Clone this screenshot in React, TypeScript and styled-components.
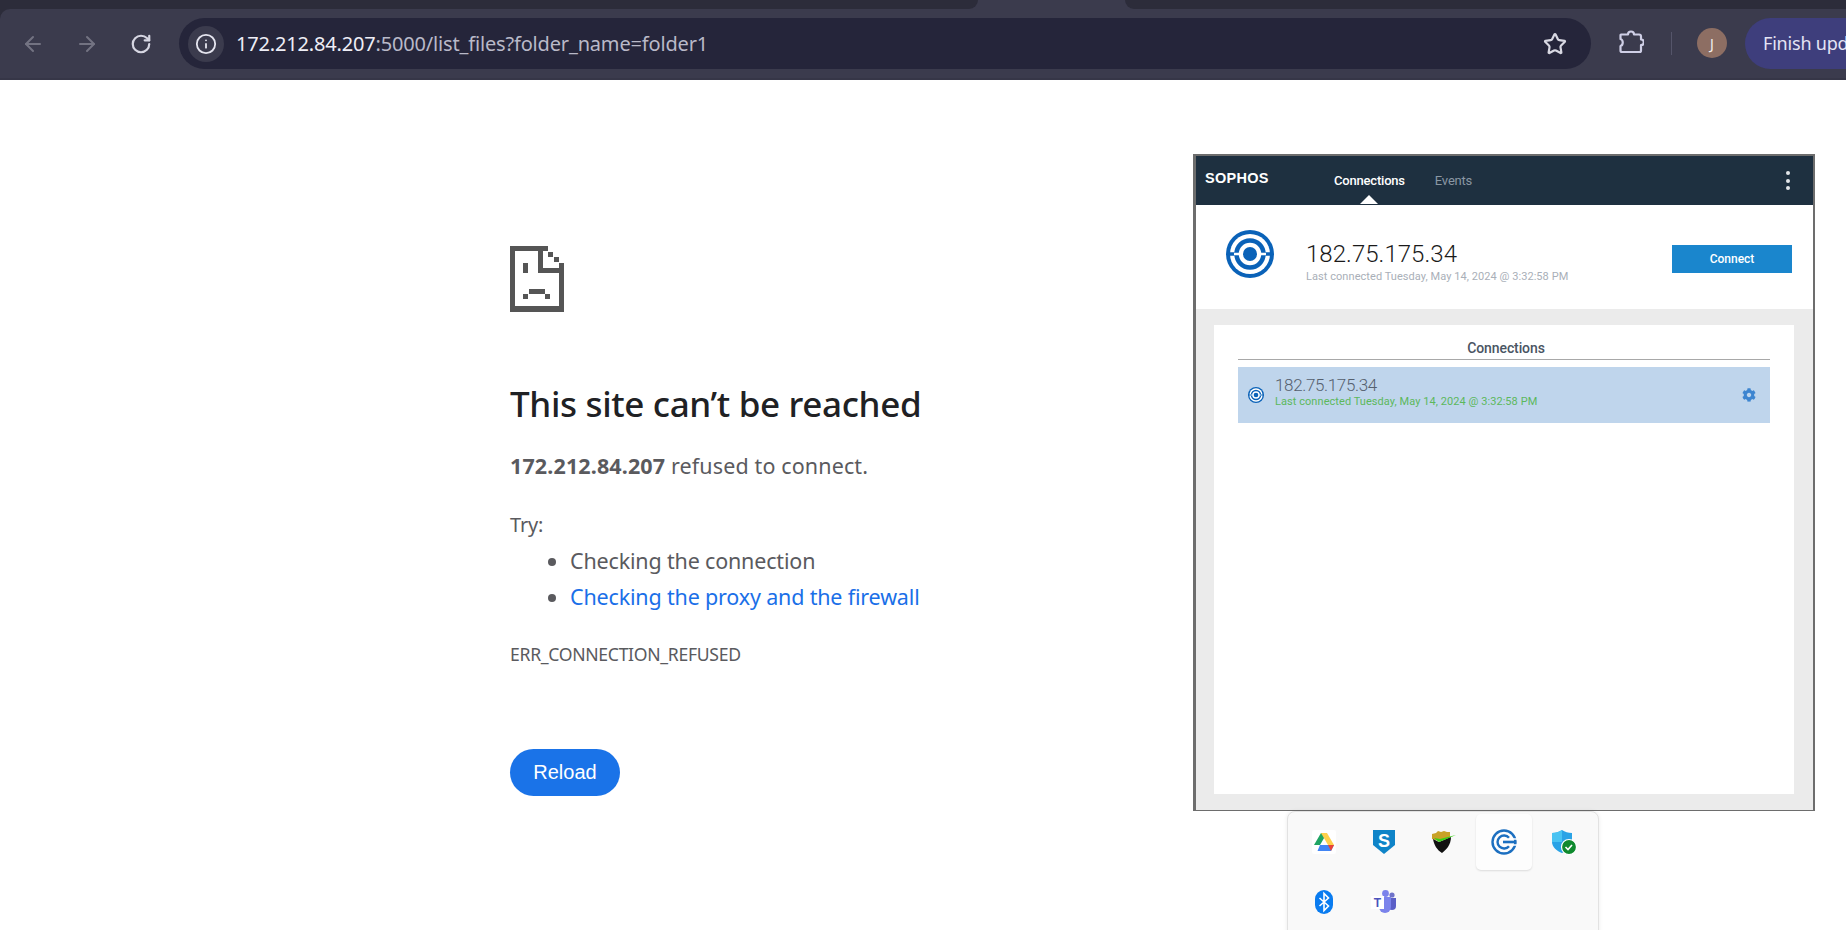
import React from "react";
import styled, { createGlobalStyle } from "styled-components";
import { ArrowLeft, ArrowRight, RotateCw, Info, Star } from "lucide-react";
import { FaCog } from "react-icons/fa";

const GlobalStyle = createGlobalStyle`
  html, body {
    margin: 0;
    padding: 0;
    background: #fff;
    overflow: hidden;
  }
`;

const Screen = styled.div`
  width: 1846px;
  height: 930px;
  overflow: hidden;
  display: flex;
  flex-direction: column;
  font-family: "Noto Sans", "Open Sans", sans-serif;
`;

// Browser chrome
const Header = styled.header`
  background: #2c2c3a;
  flex-shrink: 0;
`;

const TabStrip = styled.div`
  height: 9px;
  display: flex;
  background: #3b3b4d;
`;

const DarkTab = styled.div<{ $side: "left" | "right" }>`
  background: #2c2c3a;
  height: 9px;
  width: ${(p) => (p.$side === "left" ? "978px" : "721px")};
  margin-left: ${(p) => (p.$side === "left" ? "0" : "147px")};
  border-bottom-right-radius: ${(p) => (p.$side === "left" ? "12px" : "0")};
  border-bottom-left-radius: ${(p) => (p.$side === "right" ? "12px" : "0")};
`;

const Toolbar = styled.div`
  height: 60px;
  padding-top: 9px;
  display: flex;
  align-items: flex-start;
  background: #3b3b4d;
  border-top-left-radius: 10px;
  border-bottom: 2px solid #363647;
  overflow: hidden;
`;

const NavGroup = styled.div`
  display: flex;
  padding-left: 6px;
  margin-right: 11px;
`;

const NavButton = styled.div<{ $dim?: boolean }>`
  width: 54px;
  height: 51px;
  display: flex;
  align-items: center;
  justify-content: center;
  color: ${(p) => (p.$dim ? "#737382" : "#d6d6e2")};
`;

const AddressBar = styled.div`
  width: 1412px;
  height: 51px;
  flex-shrink: 0;
  border-radius: 26px;
  background: #25253a;
  display: flex;
  align-items: center;
  padding-left: 9px;
  padding-right: 24px;
  box-sizing: border-box;
`;

const InfoChip = styled.div`
  width: 36px;
  height: 36px;
  border-radius: 50%;
  background: #3b3b4d;
  color: #e4e4ee;
  display: flex;
  align-items: center;
  justify-content: center;
  margin-right: 12px;
`;

const UrlHost = styled.span`
  color: #eeeef6;
  font-size: 20px;
  letter-spacing: -0.17px;
`;

const UrlRest = styled(UrlHost)`
  color: #b9b9c8;
`;

const StarSlot = styled.div`
  margin-left: auto;
  display: flex;
  color: #d8d8e2;
`;

const ExtensionSlot = styled.div`
  margin-left: 28px;
  margin-top: 12px;
  width: 25px;
  height: 24px;
  flex-shrink: 0;
`;

const Divider = styled.div`
  width: 1px;
  height: 23px;
  background: #55556a;
  margin: 14px 25px 0 27px;
  flex-shrink: 0;
`;

const Avatar = styled.div`
  width: 30px;
  height: 30px;
  margin-top: 10px;
  border-radius: 50%;
  background: #8d6e63;
  color: #f3f0ee;
  font-size: 14px;
  display: flex;
  align-items: center;
  justify-content: center;
  flex-shrink: 0;
`;

const FinishButton = styled.div`
  margin-left: 18px;
  height: 51px;
  width: 220px;
  flex-shrink: 0;
  border-radius: 26px;
  background: #3e3e7c;
  color: #e4e4f4;
  font-size: 18px;
  line-height: 51px;
  padding-left: 18px;
  letter-spacing: -0.2px;
  white-space: nowrap;
`;

// Error page
const Page = styled.main`
  position: relative;
  flex: 1;
  background: #fff;
  padding: 166px 0 0 510px;
  color: #5a5a5e;
`;

const SadIcon = styled.svg`
  display: block;
  width: 54px;
  height: 66px;
`;

const Title = styled.h1`
  margin: 69px 0 0;
  font-size: 35px;
  line-height: 46px;
  font-weight: 500;
  color: #202124;
  letter-spacing: -0.34px;
`;

const Message = styled.p`
  margin: 24px 0 0;
  font-size: 21.5px;
  line-height: 30px;
  letter-spacing: 0.13px;
  b {
    font-weight: 700;
  }
`;

const TryLabel = styled.p`
  margin: 29px 0 0;
  font-size: 20px;
  line-height: 30px;
  letter-spacing: -0.2px;
`;

const TryList = styled.ul`
  margin: 3px 0 0;
  padding: 0 0 0 60px;
  font-size: 21.5px;
  line-height: 36px;
  letter-spacing: -0.17px;
`;

const TryLink = styled.span`
  color: #1a6fe8;
`;

const ErrorCode = styled.div`
  margin-top: 27px;
  font-size: 17.6px;
  line-height: 24px;
  letter-spacing: -0.3px;
`;

const ReloadButton = styled.button`
  display: block;
  margin-top: 83px;
  width: 110px;
  height: 47px;
  border: none;
  border-radius: 24px;
  background: #1a73e8;
  color: #fff;
  font-family: "Liberation Sans", Arial, sans-serif;
  font-size: 20px;
  padding: 0;
`;

// Sophos window
const SophosWindow = styled.section`
  position: absolute;
  left: 1193px;
  top: 74px;
  width: 622px;
  height: 657px;
  box-sizing: border-box;
  border: 2px solid #6d6d6d;
  border-left-width: 3px;
  border-bottom-width: 1px;
  background: #fff;
  display: flex;
  flex-direction: column;
  font-family: Roboto, "Liberation Sans", sans-serif;
`;

const SophosBar = styled.div`
  position: relative;
  height: 49px;
  flex-shrink: 0;
  background: #1e3040;
  display: flex;
  align-items: center;
  padding-left: 9px;
`;

const Brand = styled.div`
  width: 129px;
  margin-top: -5px;
  color: #fff;
  font-family: "Liberation Sans", sans-serif;
  font-size: 14.5px;
  font-weight: 700;
  letter-spacing: 0.3px;
`;

const SophosTab = styled.div<{ $active?: boolean }>`
  position: relative;
  font-size: 13px;
  letter-spacing: -0.2px;
  margin-right: 30px;
  color: ${(p) => (p.$active ? "#fff" : "#8a97a3")};
  font-weight: ${(p) => (p.$active ? 500 : 400)};

  ${(p) =>
    p.$active &&
    `&::after {
      content: "";
      position: absolute;
      left: 50%;
      bottom: -16px;
      margin-left: -9px;
      border-left: 9px solid transparent;
      border-right: 9px solid transparent;
      border-bottom: 9px solid #fff;
    }`}
`;

const MenuDots = styled.div`
  margin-left: auto;
  margin-right: 23px;
  display: flex;
  flex-direction: column;
  gap: 3.5px;
`;

const Dot = styled.span`
  width: 4px;
  height: 4px;
  border-radius: 50%;
  background: #e3e6e9;
`;

const Hero = styled.div`
  height: 104px;
  flex-shrink: 0;
  display: flex;
  align-items: center;
  padding: 0 21px 0 30px;
`;

const HeroIcon = styled.div`
  display: flex;
  margin-top: -6px;
`;

const HeroText = styled.div`
  margin-left: 32px;
  margin-top: 10px;
`;

const HeroAddress = styled.div`
  font-size: 24px;
  line-height: 26px;
  font-weight: 300;
  color: #1a1a1a;
  letter-spacing: 0.05px;
`;

const HeroSub = styled.div`
  font-size: 11px;
  line-height: 14px;
  margin-top: 3px;
  color: #a9afb8;
  letter-spacing: 0.06px;
`;

const ConnectButton = styled.div`
  margin-left: auto;
  margin-top: 3px;
  width: 120px;
  height: 28px;
  background: #1a86cd;
  color: #fff;
  font-size: 12px;
  font-weight: 500;
  display: flex;
  align-items: center;
  justify-content: center;
`;

const Panel = styled.div`
  flex: 1;
  background: #ebebeb;
  padding: 16px 19px 16px 18px;
  display: flex;
`;

const PanelInner = styled.div`
  flex: 1;
  background: #fff;
  padding: 0 24px;
`;

const PanelTitle = styled.div`
  height: 34px;
  line-height: 46px;
  text-align: center;
  text-indent: 4px;
  font-size: 14px;
  font-weight: 500;
  color: #4a5563;
  letter-spacing: -0.1px;
  border-bottom: 1px solid #a8a8a8;
`;

const ConnectionRow = styled.div`
  margin: 7px 0 0;
  height: 56px;
  background: #bfd5ec;
  display: flex;
  align-items: center;
  padding: 0 14px 0 10px;
`;

const RowText = styled.div`
  margin-left: 11px;
  margin-top: -7px;
`;

const RowAddress = styled.div`
  font-size: 17px;
  line-height: 19px;
  font-weight: 300;
  color: #55606e;
  letter-spacing: -0.36px;
`;

const RowSub = styled.div`
  font-size: 11px;
  line-height: 13px;
  color: #5cb85c;
  letter-spacing: 0.06px;
`;

const GearSlot = styled.div`
  margin-left: auto;
  display: flex;
  color: #3d85d0;
`;

// Tray popup
const TrayPopup = styled.aside`
  position: absolute;
  left: 1287px;
  top: 731px;
  width: 312px;
  height: 150px;
  box-sizing: border-box;
  padding: 0 0 0 6px;
  background: #f9f9f9;
  border: 1px solid #e2e2e2;
  border-radius: 8px;
  box-shadow: 0 0 4px rgba(0, 0, 0, 0.08);
  display: grid;
  grid-template-columns: repeat(5, 60px);
  grid-auto-rows: 60px;
`;

const TrayCell = styled.div<{ $hover?: boolean }>`
  margin: 2px 2px 2px;
  display: flex;
  align-items: center;
  justify-content: center;
  border-radius: 5px;
  background: ${(p) => (p.$hover ? "#fdfdfd" : "transparent")};
  box-shadow: ${(p) => (p.$hover ? "0 1px 2px rgba(0,0,0,0.12)" : "none")};
`;

const SadFile = () => (
  <SadIcon viewBox="0 0 54 66" shapeRendering="crispEdges" fill="#555">
    <rect x="0" y="0" width="38" height="5" />
    <rect x="0" y="0" width="5" height="66" />
    <rect x="0" y="60" width="54" height="6" />
    <rect x="49" y="17" width="5" height="49" />
    <rect x="28" y="0" width="5" height="27" />
    <rect x="28" y="22" width="26" height="5" />
    <rect x="38" y="6" width="5" height="5" />
    <rect x="44" y="11" width="5" height="5" />
    <rect x="13" y="17" width="5" height="10" />
    <rect x="19" y="43" width="16" height="5" />
    <rect x="13" y="48" width="5" height="5" />
    <rect x="35" y="48" width="5" height="5" />
  </SadIcon>
);

const ExtensionIcon = () => (
  <svg width="25" height="24" viewBox="0 0 25 24" fill="none" stroke="#cfcfe6" strokeWidth="2.2" strokeLinejoin="round">
    <path d="M2 4.500h7a3 3 0 0 1 6 0h5a2 2 0 0 1 2 2v3a2.800 2.800 0 0 1 0 5.600v5.400a1.500 1.500 0 0 1-1.500 1.500H3a1.500 1.500 0 0 1-1.500-1.500v-4.500c3-1 3-6 0-7V5a.5.5 0 0 1 .5-.5z" />
  </svg>
);

const TargetIcon = ({ size }: { size: number }) => (
  <svg width={size} height={size} viewBox="0 0 48 48" fill="none">
    <circle cx="24" cy="24" r="24" fill="#0a62b8" />
    <circle cx="24" cy="24" r="20" fill="#fff" />
    <path d="M2 24h8M38 24h8" stroke="#0a62b8" strokeWidth="3.5" />
    <circle cx="24" cy="24" r="13.500" stroke="#0a62b8" strokeWidth="4.500" />
    <path d="M8 24h9M31 24h9" stroke="#fff" strokeWidth="2.5" />
    <circle cx="24" cy="24" r="7" fill="#0a62b8" />
  </svg>
);

const DriveIcon = () => (
  <svg width="24" height="24" viewBox="0 0 24 24">
    <rect width="24" height="24" rx="2" fill="#fff" />
    <polygon points="9,3 15,3 8,15 2,15" fill="#1fa463" />
    <polygon points="15,3 22,15 16,15 9,3" fill="#ffd04b" />
    <polygon points="5.5,21 8,15 22,15 19,21" fill="#4285f4" />
    <polygon points="16,15 22,15 19,21" fill="#ea4335" />
  </svg>
);

const SophosShield = () => (
  <svg width="24" height="26" viewBox="0 0 24 26">
    <path d="M1 1h22v15l-11 9L1 16z" fill="#0f84c8" />
    <text x="12" y="17.5" textAnchor="middle" fontFamily="Liberation Sans" fontWeight="700" fontSize="18" fill="#fff">S</text>
  </svg>
);

const GoldShield = () => (
  <svg width="26" height="24" viewBox="0 0 26 24">
    <path d="M1 4l4-1 2-2 3 1 3-1 3 1 3 0v6L8 11 1 9z" fill="#c9a227" />
    <path d="M2 9l6 3 12-5c0 8-5 13-9 16C6 20 3 15 2 9z" fill="#111" />
    <path d="M3 8l5 4L25 5 9 9z" fill="#37d116" />
  </svg>
);

const CoinIcon = () => (
  <svg width="26" height="26" viewBox="0 0 26 26" fill="none" stroke="#1c6fc0">
    <circle cx="13" cy="13" r="11.5" strokeWidth="2.4" />
    <path d="M18 8.800a6.500 6.500 0 1 0 0 8.400" strokeWidth="2.4" />
    <path d="M19 10h7M19 16h7" strokeWidth="1.6" stroke="#fff" />
    <path d="M12 13h13" strokeWidth="2.6" />
  </svg>
);

const DefenderIcon = () => (
  <svg width="26" height="26" viewBox="0 0 26 26">
    <path d="M11 1c3 2 6 3 10 3v9c0 5-5 9-10 11C6 22 1 18 1 13V4c4 0 7-1 10-3z" fill="#2aa3e6" />
    <path d="M11 1v12H1V4c4 0 7-1 10-3z" fill="#49c3f2" />
    <circle cx="18" cy="18" r="7.5" fill="#0f8a2e" stroke="#fff" strokeWidth="1.2" />
    <path d="M14.5 18l2.5 2.5 4-4.5" fill="none" stroke="#fff" strokeWidth="1.6" />
  </svg>
);

const BluetoothIcon = () => (
  <svg width="18" height="24" viewBox="0 0 18 24">
    <rect width="18" height="24" rx="9" fill="#0a7cf0" />
    <path d="M4.5 8l9 8-4.5 4.5v-17L13.500 8l-9 8" fill="none" stroke="#fff" strokeWidth="1.6" />
  </svg>
);

const TeamsIcon = () => (
  <svg width="26" height="24" viewBox="0 0 26 24">
    <circle cx="21" cy="5" r="2.6" fill="#6e72c9" />
    <circle cx="14.500" cy="3.500" r="3.400" fill="#7b83eb" />
    <path d="M17 8h8v8a4 4 0 0 1-8 0z" fill="#5b5fc7" />
    <path d="M8 7h12v10a6 6 0 0 1-12 0z" fill="#7b83eb" />
    <rect x="0" y="6" width="13" height="13" fill="#fff" />
    <text x="6.500" y="17" textAnchor="middle" fontFamily="Liberation Sans" fontWeight="700" fontSize="12" fill="#4b53bc">T</text>
  </svg>
);

const LAST_CONNECTED = "Last connected Tuesday, May 14, 2024 @ 3:32:58 PM";

const App: React.FC = () => {
  return (
    <Screen>
      <GlobalStyle />
      <Header>
        <TabStrip>
          <DarkTab $side="left" />
          <DarkTab $side="right" />
        </TabStrip>
        <Toolbar>
          <NavGroup>
            <NavButton $dim>
              <ArrowLeft size={24} strokeWidth={2} />
            </NavButton>
            <NavButton $dim>
              <ArrowRight size={24} strokeWidth={2} />
            </NavButton>
            <NavButton>
              <RotateCw size={22} strokeWidth={2.4} />
            </NavButton>
          </NavGroup>
          <AddressBar>
            <InfoChip>
              <Info size={22} strokeWidth={2} />
            </InfoChip>
            <UrlHost>172.212.84.207</UrlHost>
            <UrlRest>:5000/list_files?folder_name=folder1</UrlRest>
            <StarSlot>
              <Star size={24} strokeWidth={2.2} />
            </StarSlot>
          </AddressBar>
          <ExtensionSlot>
            <ExtensionIcon />
          </ExtensionSlot>
          <Divider />
          <Avatar>J</Avatar>
          <FinishButton>Finish update</FinishButton>
        </Toolbar>
      </Header>

      <Page>
        <SadFile />
        <Title>This site can’t be reached</Title>
        <Message>
          <b>172.212.84.207</b> refused to connect.
        </Message>
        <TryLabel>Try:</TryLabel>
        <TryList>
          <li>Checking the connection</li>
          <li>
            <TryLink>Checking the proxy and the firewall</TryLink>
          </li>
        </TryList>
        <ErrorCode>ERR_CONNECTION_REFUSED</ErrorCode>
        <ReloadButton>Reload</ReloadButton>

        <SophosWindow>
          <SophosBar>
            <Brand>SOPHOS</Brand>
            <SophosTab $active>Connections</SophosTab>
            <SophosTab>Events</SophosTab>
            <MenuDots>
              <Dot />
              <Dot />
              <Dot />
            </MenuDots>
          </SophosBar>
          <Hero>
            <HeroIcon>
              <TargetIcon size={48} />
            </HeroIcon>
            <HeroText>
              <HeroAddress>182.75.175.34</HeroAddress>
              <HeroSub>{LAST_CONNECTED}</HeroSub>
            </HeroText>
            <ConnectButton>Connect</ConnectButton>
          </Hero>
          <Panel>
            <PanelInner>
              <PanelTitle>Connections</PanelTitle>
              <ConnectionRow>
                <TargetIcon size={16} />
                <RowText>
                  <RowAddress>182.75.175.34</RowAddress>
                  <RowSub>{LAST_CONNECTED}</RowSub>
                </RowText>
                <GearSlot>
                  <FaCog size={14} />
                </GearSlot>
              </ConnectionRow>
            </PanelInner>
          </Panel>
        </SophosWindow>

        <TrayPopup>
          <TrayCell>
            <DriveIcon />
          </TrayCell>
          <TrayCell>
            <SophosShield />
          </TrayCell>
          <TrayCell>
            <GoldShield />
          </TrayCell>
          <TrayCell $hover>
            <CoinIcon />
          </TrayCell>
          <TrayCell>
            <DefenderIcon />
          </TrayCell>
          <TrayCell>
            <BluetoothIcon />
          </TrayCell>
          <TrayCell>
            <TeamsIcon />
          </TrayCell>
        </TrayPopup>
      </Page>
    </Screen>
  );
};

export default App;
